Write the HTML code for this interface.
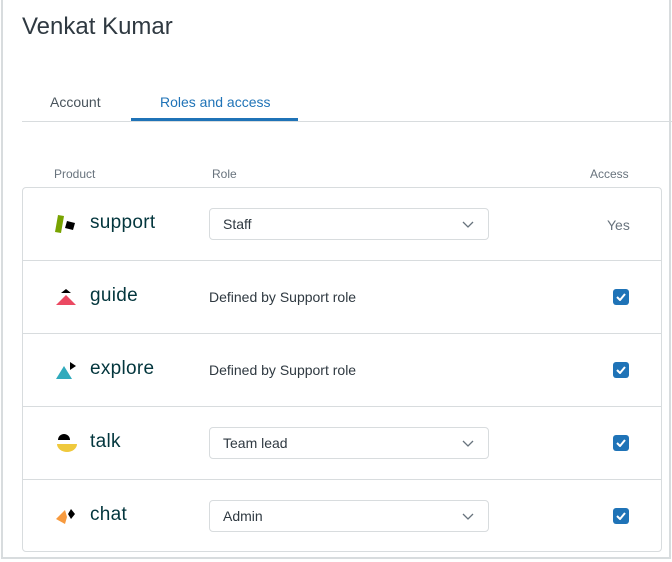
<!DOCTYPE html>
<html><head><style>
*{box-sizing:border-box;margin:0;padding:0}
body{width:672px;height:562px;background:#fff;font-family:"Liberation Sans",sans-serif;position:relative;overflow:hidden}
.frame{position:absolute;left:1px;top:-1px;width:670px;height:560px;border:2px solid #d8dcde;border-top:1px solid #d8dcde}
.t{position:absolute;white-space:nowrap}
.title{left:22px;top:13px;font-size:24px;color:#2f3941}
.tabline{position:absolute;left:22px;top:121px;width:650px;height:1px;background:#d8dcde}
.ul{position:absolute;left:131px;top:118px;width:167px;height:3px;background:#1f73b7}
.hd{font-size:12px;color:#68737d;top:167px}
.card{position:absolute;left:22px;top:187px;width:640px;height:365px;border:1px solid #d8dcde;border-radius:4px}
.row{position:absolute;left:0;width:638px;height:73px;border-top:1px solid #d8dcde}
.pn{position:absolute;left:67px;font-size:19px;color:#03363d;top:24px;letter-spacing:.3px}
.ic{position:absolute;left:32px;top:27px}
.sel{position:absolute;left:186px;top:20px;width:280px;height:32px;border:1px solid #d8dcde;border-radius:4px;font-size:14px;color:#2f3941;padding:7px 13px}
.sel svg{position:absolute;right:14px;top:12px}
.txt{position:absolute;left:186px;top:28px;font-size:14px;color:#2f3941}
.cb{position:absolute;left:590px;top:28px;width:16px;height:16px;background:#1f73b7;border-radius:3px}
.cb svg{position:absolute;left:3px;top:4px}
</style></head><body>
<div class="frame"></div>
<div class="t title">Venkat Kumar</div>
<div class="t" style="left:50px;top:94px;font-size:14px;color:#49545c">Account</div>
<div class="t" style="left:160px;top:94px;font-size:14px;color:#1f73b7">Roles and access</div>
<div class="tabline"></div><div class="ul"></div>
<div class="t hd" style="left:54px">Product</div>
<div class="t hd" style="left:212px">Role</div>
<div class="t hd" style="left:590px">Access</div>
<div class="card">
 <div class="row" style="top:0;border-top:none">
  <svg class="ic" width="24" height="20" viewBox="0 0 24 20"><polygon points="3,0 9,1 6,18 0,17" fill="#78a300"/><polygon points="12,6 20,8 18,15 10,13" fill="#000"/></svg>
  <div class="pn">support</div>
  <div class="sel">Staff<svg width="12" height="7" viewBox="0 0 12 7"><path d="M1 1l5 5 5-5" fill="none" stroke="#68737d" stroke-width="1.3"/></svg></div>
  <div class="t" style="left:584px;top:29px;font-size:14px;color:#68737d">Yes</div>
 </div>
 <div class="row" style="top:72px">
  <svg class="ic" width="24" height="20" viewBox="0 0 24 20"><polygon points="11,1 16,5 6,5" fill="#000"/><polygon points="11,7 21,17 1,17" fill="#eb4962"/></svg>
  <div class="pn">guide</div>
  <div class="txt">Defined by Support role</div>
  <div class="cb"><svg width="10" height="8" viewBox="0 0 10 8"><path d="M1 4l3 3 5-6" fill="none" stroke="#fff" stroke-width="2"/></svg></div>
 </div>
 <div class="row" style="top:145px">
  <svg class="ic" width="24" height="20" viewBox="0 0 24 20"><polygon points="9,5 17,18 1,18" fill="#30aabc"/><polygon points="15,1 21,5 15,9" fill="#000"/></svg>
  <div class="pn">explore</div>
  <div class="txt">Defined by Support role</div>
  <div class="cb"><svg width="10" height="8" viewBox="0 0 10 8"><path d="M1 4l3 3 5-6" fill="none" stroke="#fff" stroke-width="2"/></svg></div>
 </div>
 <div class="row" style="top:218px">
  <svg class="ic" width="24" height="20" viewBox="0 0 24 20"><path d="M3 6a6 6 0 0 1 12 0z" fill="#000"/><path d="M2 10h20a10 8 0 0 1-20 0z" fill="#efc93d"/></svg>
  <div class="pn">talk</div>
  <div class="sel">Team lead<svg width="12" height="7" viewBox="0 0 12 7"><path d="M1 1l5 5 5-5" fill="none" stroke="#68737d" stroke-width="1.3"/></svg></div>
  <div class="cb"><svg width="10" height="8" viewBox="0 0 10 8"><path d="M1 4l3 3 5-6" fill="none" stroke="#fff" stroke-width="2"/></svg></div>
 </div>
 <div class="row" style="top:291px">
  <svg class="ic" width="24" height="20" viewBox="0 0 24 20"><polygon points="10,3 12,10 10,17 1,12" fill="#f79a3e"/><polygon points="16,2 20,7 16,12 13,7" fill="#000"/></svg>
  <div class="pn">chat</div>
  <div class="sel">Admin<svg width="12" height="7" viewBox="0 0 12 7"><path d="M1 1l5 5 5-5" fill="none" stroke="#68737d" stroke-width="1.3"/></svg></div>
  <div class="cb"><svg width="10" height="8" viewBox="0 0 10 8"><path d="M1 4l3 3 5-6" fill="none" stroke="#fff" stroke-width="2"/></svg></div>
 </div>
</div>
</body></html>
